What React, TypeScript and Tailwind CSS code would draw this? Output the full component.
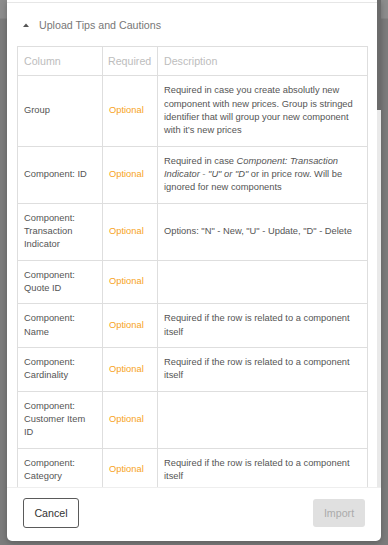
import React from 'react'

type Row = {
  column: string
  description?: React.ReactNode
}

const rows: Row[] = [
  {
    column: 'Group',
    description:
      'Required in case you create absolutly new component with new prices. Group is stringed identifier that will group your new component with it\u2019s new prices',
  },
  {
    column: 'Component: ID',
    description: (
      <>
        Required in case <i>Component: Transaction Indicator - "U" or "D"</i> or in price row. Will be ignored for new
        components
      </>
    ),
  },
  { column: 'Component: Transaction Indicator', description: 'Options: "N" - New, "U" - Update, "D" - Delete' },
  { column: 'Component: Quote ID' },
  { column: 'Component: Name', description: 'Required if the row is related to a component itself' },
  { column: 'Component: Cardinality', description: 'Required if the row is related to a component itself' },
  { column: 'Component: Customer Item ID' },
  { column: 'Component: Category', description: 'Required if the row is related to a component itself' },
]

export default function App() {
  return (
    <div className="relative w-[388px] h-[545px] overflow-hidden bg-[#7c7c7c] font-['Liberation_Sans',Arial,sans-serif]">
      <div className="h-[19px] bg-[#8d8d8d] border-b border-[#858585]" />

      <div className="absolute left-[7px] top-0 w-[374px] h-[541px] flex flex-col bg-white rounded-b-[5px] shadow-[0_2px_6px_rgba(0,0,0,0.25)]">
        <div className="relative h-[487px] overflow-hidden">
          <div className="pr-[4px]">
            <div className="h-[3px] border-b border-[#e6e6e6]" />

            <div className="flex items-center h-[43px] pl-4 gap-[10px]">
              <svg width="6" height="4" viewBox="0 0 6 4" className="shrink-0">
                <path d="M0 4L3 0.6L6 4Z" fill="#555" />
              </svg>
              <span className="text-[10.67px] text-[#777]">Upload Tips and Cautions</span>
            </div>

            <table className="ml-[10px] w-[350px] table-fixed border-collapse">
              <colgroup>
                <col className="w-[85px]" />
                <col className="w-[55px]" />
                <col className="w-[210px]" />
              </colgroup>
              <thead>
                <tr className="text-left text-[10.67px] leading-[13.33px] text-[#bdbdbd]">
                  <th className="border border-[#dedede] px-[6px] py-[7.5px] font-normal">Column</th>
                  <th className="border border-[#dedede] px-[5px] py-[7.5px] font-normal">Required</th>
                  <th className="border border-[#dedede] px-[6px] py-[7.5px] font-normal">Description</th>
                </tr>
              </thead>
              <tbody className="text-[9.33px] leading-[13.33px] text-[#555]">
                {rows.map((r) => (
                  <tr key={r.column}>
                    <td className="border border-[#dedede] px-[6px] py-2 align-middle">{r.column}</td>
                    <td className="border border-[#dedede] px-[6px] py-2 align-middle text-[#f7a324]">Optional</td>
                    <td className="border border-[#dedede] px-[6px] py-2 align-middle">{r.description}</td>
                  </tr>
                ))}
              </tbody>
            </table>
          </div>

          <div className="absolute right-0 top-0 w-[4px] h-full bg-[#e9e9e9]">
            <div className="h-[110px] bg-[#6b6b6b]" />
          </div>
        </div>

        <div className="flex items-center justify-between h-[54px] px-4 pb-[4px] border-t border-[#eeeeee]">
          <button className="w-[56px] h-[30px] rounded-[3px] border border-[#5a5a5a] bg-white text-[10.67px] text-[#333]">
            Cancel
          </button>
          <button className="w-[52px] h-[28px] rounded-[3px] bg-[#e0e0e0] text-[10.67px] text-[#ababab]">Import</button>
        </div>
      </div>
    </div>
  )
}
